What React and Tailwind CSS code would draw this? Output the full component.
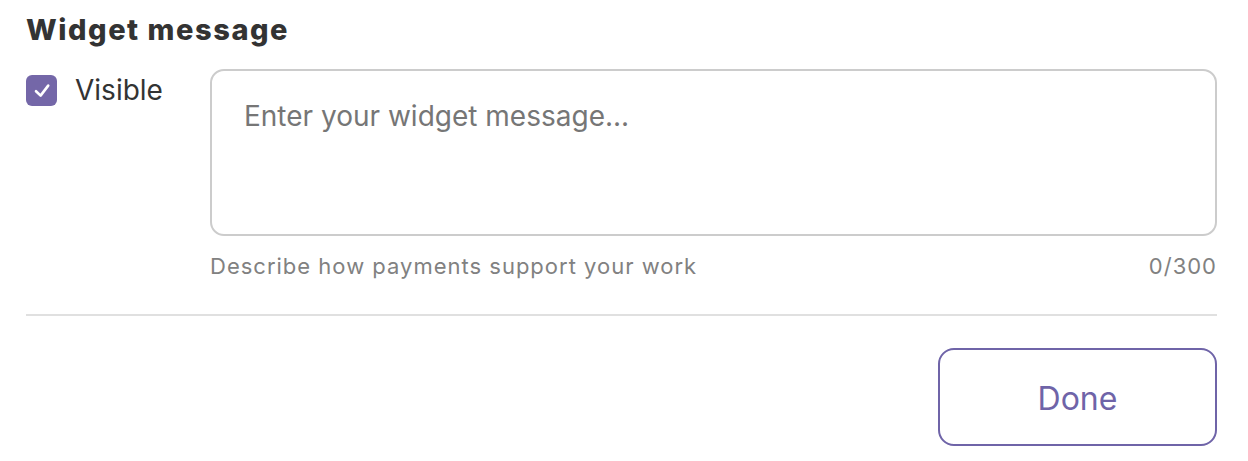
import React from "react";

export default function App() {
  return (
    <div
      className="w-[1248px] h-[461px] bg-white pl-[26px] pr-[31px] pt-[12px] text-[#333333]"
      style={{ fontFamily: "Inter, 'Noto Sans', sans-serif" }}
    >
      <h1 className="text-[29px] leading-[36px] font-extrabold tracking-[1.55px] text-[#333333]">Widget message</h1>

      <div className="mt-[21px] flex items-start">
        <label className="w-[184px] shrink-0 flex items-center gap-[18px] pt-[3px]">
          <span className="w-[31px] h-[31px] rounded-[6px] bg-[#7467a8] flex items-center justify-center">
            <svg className="w-[20px] h-[20px]" viewBox="0 0 20 20" fill="none">
              <path
                d="M4 11.2 L8.6 15.6 L16.2 5.6"
                stroke="white"
                strokeWidth="2.6"
                strokeLinecap="round"
                strokeLinejoin="round"
              />
            </svg>
          </span>
          <span className="text-[28px] leading-[36px] text-[#333333]">Visible</span>
        </label>

        <div className="flex-1 min-w-0">
          <textarea
            className="block w-full h-[167px] resize-none rounded-[14px] border-2 border-[#cccccc] px-[32px] pt-[27px] text-[28px] leading-[36px] text-[#333333] placeholder:text-[#767676] outline-none"
            placeholder="Enter your widget message..."
          />
          <div className="mt-[16px] flex justify-between text-[22px] leading-[28px] tracking-[1px] text-[#818181]">
            <span>Describe how payments support your work</span>
            <span>0/300</span>
          </div>
        </div>
      </div>

      <div className="mt-[34px] h-[2px] bg-[#e0e0e0]" />

      <div className="mt-[32px] flex justify-end">
        <button className="w-[279px] h-[98px] pt-[3px] rounded-[16px] border-2 border-[#6f64a8] text-[32px] text-[#6f64a8] bg-white">
          Done
        </button>
      </div>
    </div>
  );
}
